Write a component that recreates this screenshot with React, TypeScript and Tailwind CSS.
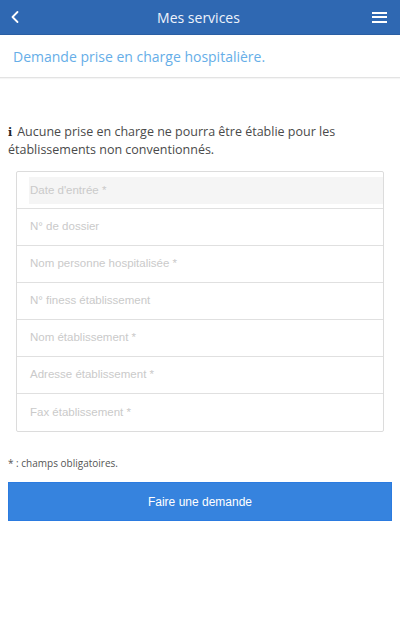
import { ChevronLeft } from 'lucide-react';

const fields = [
  "N° de dossier",
  "Nom personne hospitalisée *",
  "N° finess établissement",
  "Nom établissement *",
  "Adresse établissement *",
  "Fax établissement *",
];

export default function App() {
  return (
    <div className="w-[400px] h-[640px] bg-white font-['Open_Sans',sans-serif]">
      {/* Header */}
      <div className="h-[35px] bg-[#2f68b2] border-b border-[#2a5ea3] flex items-center justify-between px-[5px] text-white">
        <ChevronLeft className="w-[20px] h-[20px]" strokeWidth={2.2} />
        <span className="text-[14px] text-[#eef3fb]">Mes services</span>
        <div className="w-[15px] mr-[8px] flex flex-col gap-[2.5px]">
          <div className="h-[2px] bg-white" />
          <div className="h-[2px] bg-white" />
          <div className="h-[2px] bg-white" />
        </div>
      </div>

      {/* Sub header */}
      <div className="h-[43px] border-b border-[#e3e3e3] shadow-[0_1px_1px_rgba(0,0,0,0.04)] flex items-center px-[13px]">
        <span className="text-[14px] text-[#66aee8]">Demande prise en charge hospitalière.</span>
      </div>

      {/* Info */}
      <div className="pt-[45px] px-[8px] text-[12.5px] leading-[17px] text-[#4a4a4a]">
        <span className="mr-[5px] font-['DejaVu_Serif',serif] font-bold text-[11px] text-[#222]">i</span>
        Aucune prise en charge ne pourra être établie pour les établissements non conventionnés.
      </div>

      {/* Form */}
      <div className="mt-[13px] mx-[16px] border border-[#dcdcdc] rounded-[2px] font-['Liberation_Sans',sans-serif] text-[11.5px] text-[#cacaca]">
        <div className="h-[37px] border-b border-[#e0e0e0] flex items-start pt-[5px] pl-[12px]">
          <div className="flex-1 h-[27px] bg-[#f5f5f5] flex items-center pl-[1px]">Date d'entrée *</div>
        </div>
        {fields.map((f, i) => (
          <div
            key={i}
            className={`h-[37px] flex items-center pl-[13px] ${i < fields.length - 1 ? 'border-b border-[#e0e0e0]' : ''}`}
          >
            {f}
          </div>
        ))}
      </div>

      <div className="mt-[24px] px-[8px] text-[10px] text-[#555]">* : champs obligatoires.</div>

      <div className="mt-[11px] mx-[8px]">
        <button className="w-full h-[39px] bg-[#3683de] border border-[#2b7be0] text-white text-[12px] font-['Liberation_Sans',sans-serif]">
          Faire une demande
        </button>
      </div>
    </div>
  );
}
